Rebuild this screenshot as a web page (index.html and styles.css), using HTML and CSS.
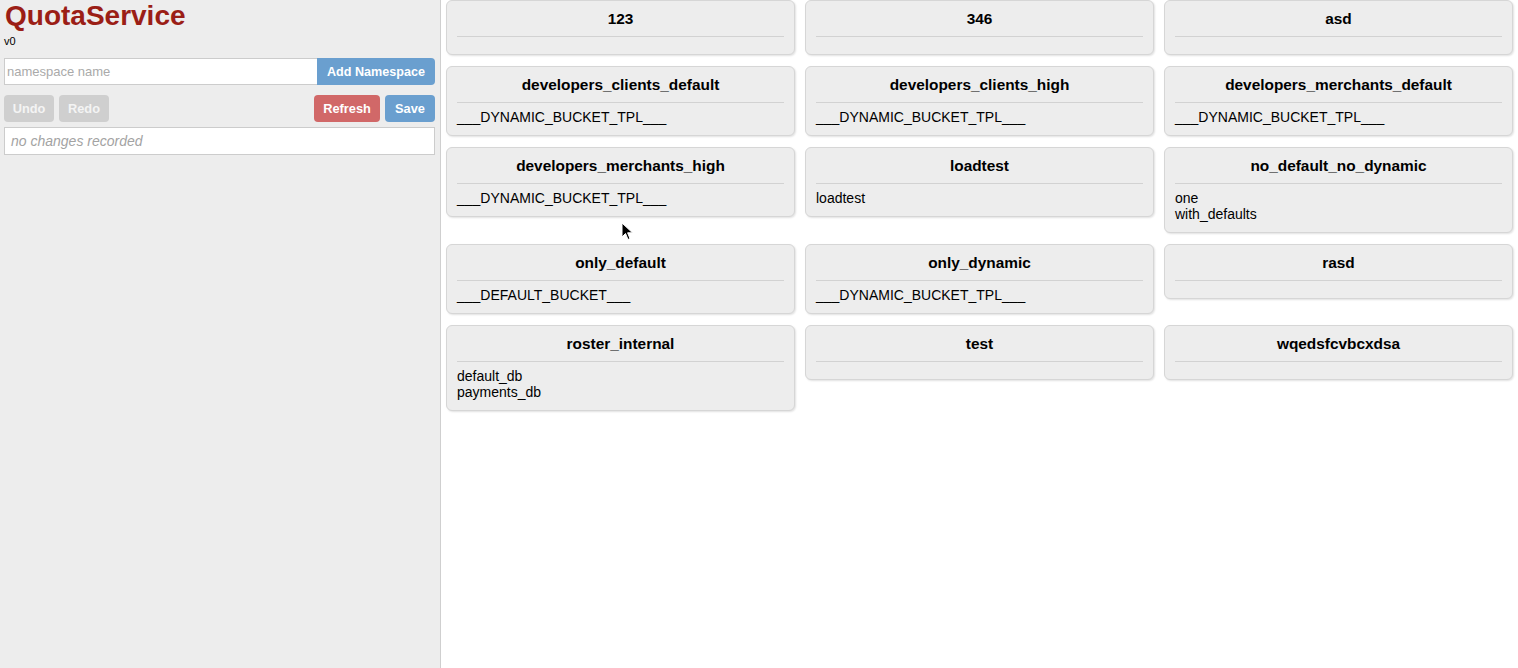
FILE: index.html
```html
<!DOCTYPE html>
<html>
<head>
<meta charset="utf-8">
<title>QuotaService</title>
<link rel="stylesheet" href="styles.css">
</head>
<body>
<div class="app">
  <aside class="sidebar">
    <h1 class="logo">QuotaService</h1>
    <div class="version">v0</div>
    <div class="add-row">
      <input class="ns-input" type="text" placeholder="namespace name">
      <button class="btn btn-blue btn-add">Add Namespace</button>
    </div>
    <div class="action-row">
      <div class="group">
        <button class="btn btn-disabled">Undo</button>
        <button class="btn btn-disabled">Redo</button>
      </div>
      <div class="group">
        <button class="btn btn-red">Refresh</button>
        <button class="btn btn-blue">Save</button>
      </div>
    </div>
    <div class="changes">no changes recorded</div>
  </aside>
  <main class="main">
    <div class="card"><div class="card-title">123</div><div class="card-body"></div></div>
    <div class="card"><div class="card-title">346</div><div class="card-body"></div></div>
    <div class="card"><div class="card-title">asd</div><div class="card-body"></div></div>

    <div class="card"><div class="card-title">developers_clients_default</div><div class="card-body"><div>___DYNAMIC_BUCKET_TPL___</div></div></div>
    <div class="card"><div class="card-title">developers_clients_high</div><div class="card-body"><div>___DYNAMIC_BUCKET_TPL___</div></div></div>
    <div class="card"><div class="card-title">developers_merchants_default</div><div class="card-body"><div>___DYNAMIC_BUCKET_TPL___</div></div></div>

    <div class="card"><div class="card-title">developers_merchants_high</div><div class="card-body"><div>___DYNAMIC_BUCKET_TPL___</div></div></div>
    <div class="card"><div class="card-title">loadtest</div><div class="card-body"><div>loadtest</div></div></div>
    <div class="card"><div class="card-title">no_default_no_dynamic</div><div class="card-body"><div>one</div><div>with_defaults</div></div></div>

    <div class="card"><div class="card-title">only_default</div><div class="card-body"><div>___DEFAULT_BUCKET___</div></div></div>
    <div class="card"><div class="card-title">only_dynamic</div><div class="card-body"><div>___DYNAMIC_BUCKET_TPL___</div></div></div>
    <div class="card"><div class="card-title">rasd</div><div class="card-body"></div></div>

    <div class="card"><div class="card-title">roster_internal</div><div class="card-body"><div>default_db</div><div>payments_db</div></div></div>
    <div class="card"><div class="card-title">test</div><div class="card-body"></div></div>
    <div class="card"><div class="card-title">wqedsfcvbcxdsa</div><div class="card-body"></div></div>
  </main>
</div>
<svg class="cursor" width="14" height="20" viewBox="0 0 14 20">
  <path d="M1 1 L1 15 L4.5 11.5 L7 17.5 L9 16.6 L6.6 10.8 L11.5 10.8 Z" fill="#000" stroke="#fff" stroke-width="1" stroke-linejoin="round"/>
</svg>
</body>
</html>
```
FILE: styles.css
```css
html, body {
  margin: 0;
  padding: 0;
  height: 100%;
}
body {
  font-family: "Liberation Sans", Arial, sans-serif;
  color: #000;
  background: #fff;
  overflow: hidden;
}
.app {
  display: flex;
  height: 668px;
}
.sidebar {
  width: 431px;
  flex: 0 0 431px;
  padding: 0 5px 0 4px;
  background: #ededed;
  border-right: 1px solid #cfcfcf;
}
.logo {
  margin: 0;
  font-size: 28px;
  line-height: 32px;
  font-weight: bold;
  color: #9b1e16;
  padding-left: 1px;
}
.version {
  font-size: 11px;
  line-height: 14px;
  margin-top: 2px;
  color: #000;
}
.add-row {
  display: flex;
  margin-top: 10px;
  height: 27px;
}
.ns-input {
  flex: 1;
  box-sizing: border-box;
  height: 27px;
  margin: 0;
  border: 1px solid #cccccc;
  border-right: none;
  background: #fff;
  padding: 0 2px;
  font-family: "Liberation Sans", Arial, sans-serif;
  font-size: 13px;
  outline: none;
}
.ns-input::placeholder {
  color: #aaaaaa;
}
.btn {
  height: 27px;
  border: none;
  border-radius: 4px;
  color: #fff;
  font-family: "Liberation Sans", Arial, sans-serif;
  font-weight: bold;
  font-size: 12.8px;
  padding: 0 10px;
  margin: 0;
  cursor: pointer;
}
.btn-add {
  border-radius: 0 4px 4px 0;
  width: 118px;
  padding: 0;
  font-size: 12.6px;
}
.btn-blue {
  background: #6a9fcf;
}
.btn-red {
  background: #d16868;
}
.btn-disabled {
  background: #cfcfcf;
  color: #f4f4f4;
}
.action-row {
  display: flex;
  justify-content: space-between;
  margin-top: 10px;
}
.group {
  display: flex;
  gap: 5px;
}
.group .btn-disabled {
  width: 50px;
  padding: 0;
}
.group .btn-red {
  width: 66px;
  padding: 0;
}
.group .btn-blue {
  width: 50px;
  padding: 0;
}
.changes {
  margin-top: 5px;
  height: 28px;
  box-sizing: border-box;
  background: #fff;
  border: 1px solid #cccccc;
  padding: 0 6px;
  line-height: 26px;
  font-size: 14px;
  font-style: italic;
  color: #a3a3a3;
}
.main {
  flex: 1;
  display: grid;
  grid-template-columns: repeat(3, 1fr);
  column-gap: 10px;
  row-gap: 11px;
  padding: 0 5px;
  align-items: start;
  align-content: start;
}
.card {
  background: #ededed;
  border: 1px solid #d6d6d6;
  border-radius: 6px;
  box-shadow: 1px 1px 2px rgba(0, 0, 0, 0.12);
  padding: 0 10px;
}
.card-title {
  text-align: center;
  font-weight: bold;
  font-size: 15.4px;
  line-height: 18px;
  padding: 9px 0 8px;
  border-bottom: 1px solid #d2d2d2;
}
.card-body {
  font-size: 14px;
  line-height: 16px;
  padding: 6px 0 10px;
  min-height: 1px;
}
.cursor {
  position: absolute;
  left: 621px;
  top: 222px;
}
```
